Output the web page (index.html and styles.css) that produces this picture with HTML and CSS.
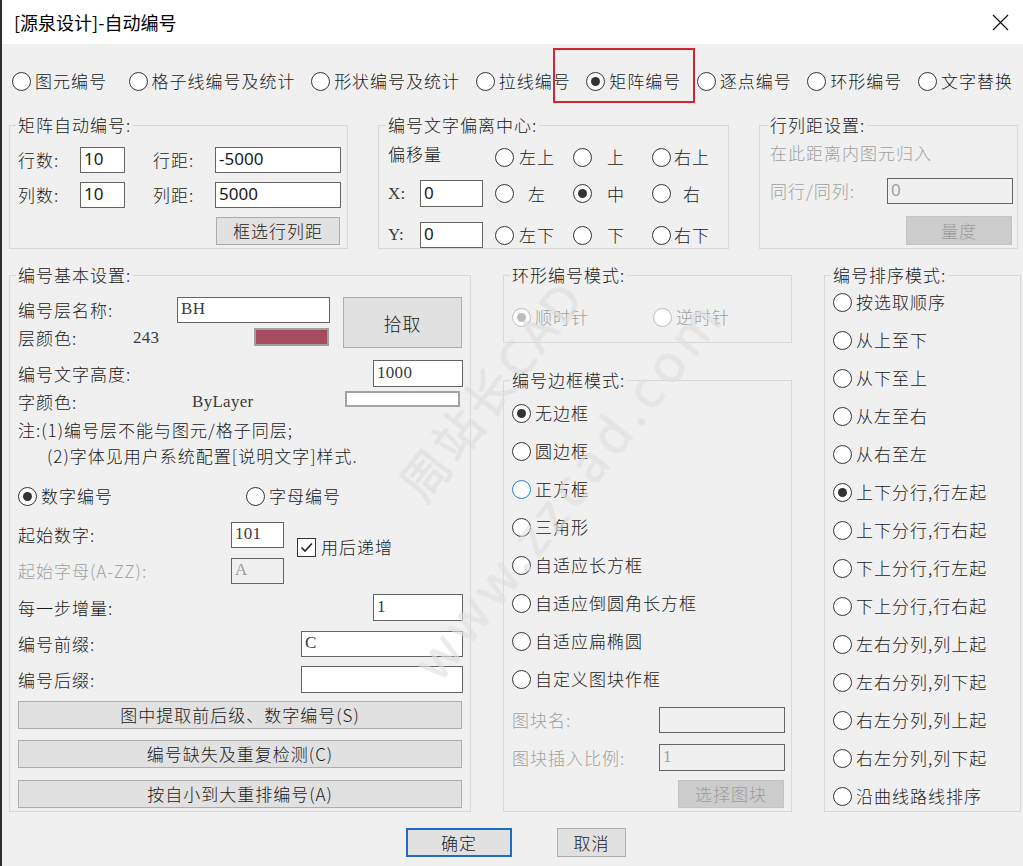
FILE: index.html
```html
<!DOCTYPE html>
<html lang="zh-CN">
<head>
<meta charset="utf-8">
<title>[源泉设计]-自动编号</title>
<link rel="stylesheet" href="styles.css">
</head>
<body>
<div class="win">
  <div class="titlebar">
    <span class="title">[源泉设计]-自动编号</span>
    <svg class="close" width="17" height="17" viewBox="0 0 17 17"><path d="M1 1L16 16M16 1L1 16" stroke="#111" stroke-width="1.2" fill="none"/></svg>
  </div>

  <div class="tabs">
    <span class="opt"><i class="rd"></i><span>图元编号</span></span>
    <span class="opt"><i class="rd"></i><span>格子线编号及统计</span></span>
    <span class="opt"><i class="rd"></i><span>形状编号及统计</span></span>
    <span class="opt"><i class="rd"></i><span>拉线编号</span></span>
    <span class="opt"><i class="rd on"></i><span>矩阵编号</span></span>
    <span class="opt"><i class="rd"></i><span>逐点编号</span></span>
    <span class="opt"><i class="rd"></i><span>环形编号</span></span>
    <span class="opt"><i class="rd"></i><span>文字替换</span></span>
    <div class="mark"></div>
  </div>

  <div class="toprow">
    <fieldset class="grp g1">
      <legend>矩阵自动编号:</legend>
      <div class="g1grid">
        <span>行数:</span><div class="tb sans">10</div><span></span>
        <span>行距:</span><div class="tb sans">-5000</div>
        <span>列数:</span><div class="tb sans">10</div><span></span>
        <span>列距:</span><div class="tb sans">5000</div>
        <div class="btn g1btn">框选行列距</div>
      </div>
    </fieldset>

    <fieldset class="grp g2">
      <legend>编号文字偏离中心:</legend>
      <div class="r2 r2a">
        <span class="offl">偏移量</span>
        <span class="cell c1"><i class="rd"></i><span class="cl w46">左上</span></span>
        <span class="cell c2"><i class="rd"></i><span class="cl w48">上</span></span>
        <span class="cell c3"><i class="rd"></i><span class="cl w42">右上</span></span>
      </div>
      <div class="r2 r2b">
        <span class="xl m">X:</span><div class="tb sans xin">0</div>
        <span class="cell c1"><i class="rd"></i><span class="cl w46">左</span></span>
        <span class="cell c2"><i class="rd on"></i><span class="cl w48">中</span></span>
        <span class="cell c3"><i class="rd"></i><span class="cl w42">右</span></span>
      </div>
      <div class="r2 r2c">
        <span class="xl m">Y:</span><div class="tb sans xin">0</div>
        <span class="cell c1"><i class="rd"></i><span class="cl w46">左下</span></span>
        <span class="cell c2"><i class="rd"></i><span class="cl w48">下</span></span>
        <span class="cell c3"><i class="rd"></i><span class="cl w42">右下</span></span>
      </div>
    </fieldset>

    <fieldset class="grp g3">
      <legend>行列距设置:</legend>
      <div class="dis line20">在此距离内图元归入</div>
      <div class="g3row">
        <span class="dis g3lab">同行/同列:</span><div class="tb tbdis sans g3in">0</div>
      </div>
      <div class="btn btndis g3btn">量度</div>
    </fieldset>
  </div>

  <div class="mainrow">
    <fieldset class="grp g4">
      <legend>编号基本设置:</legend>
      <div class="blk1">
        <span class="b1lab">编号层名称:</span>
        <div class="tb m bh">BH</div>
        <div class="btn pick">拾取</div>
        <span class="b1lab2">层颜色:</span>
        <span class="m num243">243</span>
        <div class="swatch"></div>
      </div>
      <div class="row rowc">
        <span>编号文字高度:</span><div class="tb m w90">1000</div>
      </div>
      <div class="row rowd">
        <span class="w174">字颜色:</span><span class="m">ByLayer</span><div class="wswatch"></div>
      </div>
      <div class="note">注:(1)编号层不能与图元/格子同层;</div>
      <div class="note note2">(2)字体见用户系统配置[说明文字]样式.</div>
      <div class="row rowg">
        <span class="opt w228"><i class="rd on"></i><span>数字编号</span></span>
        <span class="opt"><i class="rd"></i><span>字母编号</span></span>
      </div>
      <div class="blk2">
        <span>起始数字:</span><div class="tb m">101</div>
        <div class="chk">
          <span class="cb"><svg width="17" height="17" viewBox="0 0 17 17"><path d="M3.5 8.5L7 12L14 4.5" stroke="#222" stroke-width="1.6" fill="none"/></svg></span>
          <span>用后递增</span>
        </div>
        <span class="dis">起始字母(A-ZZ):</span><div class="tb tbdis m">A</div>
      </div>
      <div class="row rowj">
        <span>每一步增量:</span><div class="tb m w90">1</div>
      </div>
      <div class="row rowk">
        <span>编号前缀:</span><div class="tb m w162">C</div>
      </div>
      <div class="row rowl">
        <span>编号后缀:</span><div class="tb m w162"></div>
      </div>
      <div class="btn wide b1">图中提取前后级、数字编号(S)</div>
      <div class="btn wide b2">编号缺失及重复检测(C)</div>
      <div class="btn wide b3">按自小到大重排编号(A)</div>
    </fieldset>

    <div class="col2">
      <fieldset class="grp g5">
        <legend>环形编号模式:</legend>
        <div class="row">
          <span class="opt w142 dis"><i class="rd on rddis"></i><span>顺时针</span></span>
          <span class="opt dis"><i class="rd rddis"></i><span>逆时针</span></span>
        </div>
      </fieldset>
      <fieldset class="grp g6">
        <legend>编号边框模式:</legend>
        <div class="list">
          <span class="opt"><i class="rd on"></i><span>无边框</span></span>
          <span class="opt"><i class="rd"></i><span>圆边框</span></span>
          <span class="opt"><i class="rd hov"></i><span>正方框</span></span>
          <span class="opt"><i class="rd"></i><span>三角形</span></span>
          <span class="opt"><i class="rd"></i><span>自适应长方框</span></span>
          <span class="opt"><i class="rd"></i><span>自适应倒圆角长方框</span></span>
          <span class="opt"><i class="rd"></i><span>自适应扁椭圆</span></span>
          <span class="opt"><i class="rd"></i><span>自定义图块作框</span></span>
        </div>
        <div class="row rowbn">
          <span class="dis">图块名:</span><div class="tb tbdis w126"></div>
        </div>
        <div class="row rowbs">
          <span class="dis">图块插入比例:</span><div class="tb tbdis m w126">1</div>
        </div>
        <div class="btn btndis selblk">选择图块</div>
      </fieldset>
    </div>

    <fieldset class="grp g7">
      <legend>编号排序模式:</legend>
      <div class="list">
        <span class="opt"><i class="rd"></i><span>按选取顺序</span></span>
        <span class="opt"><i class="rd"></i><span>从上至下</span></span>
        <span class="opt"><i class="rd"></i><span>从下至上</span></span>
        <span class="opt"><i class="rd"></i><span>从左至右</span></span>
        <span class="opt"><i class="rd"></i><span>从右至左</span></span>
        <span class="opt"><i class="rd on"></i><span>上下分行,行左起</span></span>
        <span class="opt"><i class="rd"></i><span>上下分行,行右起</span></span>
        <span class="opt"><i class="rd"></i><span>下上分行,行左起</span></span>
        <span class="opt"><i class="rd"></i><span>下上分行,行右起</span></span>
        <span class="opt"><i class="rd"></i><span>左右分列,列上起</span></span>
        <span class="opt"><i class="rd"></i><span>左右分列,列下起</span></span>
        <span class="opt"><i class="rd"></i><span>右左分列,列上起</span></span>
        <span class="opt"><i class="rd"></i><span>右左分列,列下起</span></span>
        <span class="opt"><i class="rd"></i><span>沿曲线路线排序</span></span>
      </div>
    </fieldset>
  </div>

  <div class="footer">
    <div class="btn ok">确定</div>
    <div class="btn cancel">取消</div>
  </div>

  <div class="wm wm1">周站长CAD</div>
  <div class="wm wm2">www.zzcad.com</div>
</div>
</body>
</html>
```

FILE: styles.css
```css
* { box-sizing: border-box; }
html, body { margin: 0; padding: 0; background: #2b2b2b; }

.win {
  position: relative;
  width: 1023px;
  height: 866px;
  overflow: hidden;
  border-left: 2px solid #2d2d2d;
  background: #f0f0f0;
  font-family: "Noto Sans CJK SC", "Noto Sans", sans-serif;
  font-size: 17px;
  font-weight: 300;
  line-height: 20px;
  letter-spacing: 1px;
  color: #1a1a1a;
}

.m { font-family: "Liberation Serif", "Noto Sans CJK SC", serif; font-size: 17px; font-weight: 400; letter-spacing: 0.3px; color: #3a3a3a; }
.sans { font-family: "Noto Sans", "Noto Sans CJK SC", sans-serif; font-size: 17px; font-weight: 400; letter-spacing: 0; }
.dis { color: #a0a0a0; }

/* title bar */
.titlebar {
  height: 44px;
  background: #fff;
  display: flex;
  align-items: center;
  justify-content: space-between;
  padding: 0 14px 0 12px;
}
.title { font-size: 18px; font-weight: 400; letter-spacing: 0; color: #000; }

/* tabs */
.tabs {
  position: relative;
  height: 71px;
  display: flex;
  justify-content: space-between;
  align-items: flex-start;
  padding: 27px 10px 0 10px;
}
.tabs > .opt:first-child { margin-right: 6px; }
.mark {
  position: absolute;
  left: 551px;
  top: 4px;
  width: 142px;
  height: 55px;
  border: 2px solid #d5262f;
}

/* radio */
.opt { display: flex; align-items: center; gap: 4px; height: 20px; white-space: nowrap; }
.rd {
  position: relative;
  flex: none;
  display: block;
  width: 19px;
  height: 19px;
  border: 1px solid #333;
  border-radius: 50%;
  background: #fff;
}
.rd.on::after {
  content: "";
  position: absolute;
  left: 4px;
  top: 4px;
  width: 9px;
  height: 9px;
  border-radius: 50%;
  background: #333;
}
.rd.rddis { border-color: #bcbcbc; }
.rd.rddis.on::after { background: #bcbcbc; }
.rd.hov { border-color: #2a7bd0; }

/* group boxes */
.grp {
  margin: 0;
  min-width: 0;
  border: 1px solid #d9d9d9;
}
.grp legend { padding: 0 2px; margin-left: -2px; line-height: 20px; }

.toprow { display: flex; gap: 30px; padding-left: 7px; }

/* input box */
.tb {
  display: flex;
  align-items: center;
  background: #fff;
  border: 1px solid #646464;
  padding: 0 3px 2px 3px;
  height: 100%;
  white-space: nowrap;
}
.tbdis { background: #f0f0f0; color: #a0a0a0; }

/* buttons */
.btn {
  display: flex;
  align-items: center;
  justify-content: center;
  background: #e1e1e1;
  border: 1px solid #adadad;
  white-space: nowrap;
}
.btndis { background: #cccccc; border-color: #c4c4c4; color: #9c9c9c; }

/* group 1 */
.g1 { width: 339px; height: 134px; padding: 12px 6px 0 8px; }
.g1grid {
  display: grid;
  grid-template-columns: 62px 45px 28px 62px 126px;
  grid-template-rows: 26px 26px 28px;
  row-gap: 9px;
  align-items: center;
}
.g1grid .tb { height: 26px; }
.g1btn { grid-column: 4 / 6; justify-self: end; width: 124px; height: 28px; margin-right: 1px; }

/* group 2 */
.g2 { width: 351px; height: 134px; padding: 9px 0 0 9px; }
.r2 { display: flex; align-items: center; }
.r2a { height: 26px; }
.r2b { height: 27px; margin-top: 10px; }
.r2c { height: 26px; margin-top: 15px; }
.offl { width: 107px; align-self: flex-start; }
.xl { width: 32px; }
.xin { width: 63px; margin-right: 12px; }
.cell { display: flex; align-items: center; }
.c1 { width: 78px; }
.c2 { width: 79px; }
.cl { text-align: center; }
.w46 { width: 46px; }
.w48 { width: 48px; }
.w42 { width: 42px; }

/* group 3 */
.g3 { width: 259px; height: 134px; padding: 8px 0 0 10px; }
.line20 { height: 20px; }
.g3row { display: flex; align-items: center; height: 26px; margin-top: 15px; }
.g3lab { width: 117px; }
.g3in { width: 126px; }
.g3btn { width: 106px; height: 29px; margin-top: 12px; margin-left: 136px; }

/* main area */
.mainrow { display: flex; align-items: flex-start; gap: 32px; padding-left: 7px; margin-top: 16px; }

.g4 { width: 462px; height: 547px; padding: 12px 7px 0 8px; }
.blk1 {
  display: grid;
  grid-template-columns: 115px 44px 77px 76px 13px 119px;
  grid-template-rows: 26px 20px;
  row-gap: 5px;
  align-items: center;
}
.b1lab { grid-column: 1 / 3; grid-row: 1; }
.bh { grid-column: 3 / 5; grid-row: 1; }
.pick { grid-column: 6; grid-row: 1 / 3; align-self: stretch; font-size: 18px; }
.b1lab2 { grid-column: 1; grid-row: 2; }
.num243 { grid-column: 2 / 4; grid-row: 2; }
.swatch {
  grid-column: 4; grid-row: 2;
  align-self: start;
  width: 75px; height: 18px;
  background: #a64a5f;
  border: 2px solid #9f9f9f;
}

.row { display: flex; align-items: center; justify-content: space-between; }
.rowc { margin-top: 12px; height: 27px; }
.w90 { width: 90px; }
.w162 { width: 162px; }
.w126 { width: 126px; }
.rowd { margin-top: 3px; height: 24px; justify-content: flex-start; }
.w174 { width: 174px; }
.wswatch {
  margin-left: auto;
  margin-right: 3px;
  align-self: flex-start;
  margin-top: 1px;
  width: 115px;
  height: 16px;
  background: #fff;
  border: 2px solid #a3a3a3;
}
.note { height: 26px; margin-top: 3px; display: flex; align-items: center; white-space: nowrap; }
.note2 { margin-top: 0; padding-left: 29px; }
.rowg { margin-top: 17px; height: 20px; justify-content: flex-start; }
.w228 { width: 228px; }
.w142 { width: 141px; }

.blk2 {
  display: grid;
  grid-template-columns: 213px 53px 13px auto;
  grid-template-rows: 26px 26px;
  row-gap: 10px;
  align-items: center;
  margin-top: 16px;
}
.blk2 > span:nth-child(1) { grid-column: 1; grid-row: 1; }
.blk2 > .tb:nth-child(2) { grid-column: 2; grid-row: 1; }
.chk {
  grid-column: 4; grid-row: 1 / 3;
  align-self: start;
  margin-top: 15px;
  display: flex; align-items: center; gap: 5px;
}
.cb {
  display: flex; align-items: center; justify-content: center;
  width: 19px; height: 19px;
  border: 1px solid #333;
  background: #fff;
}
.blk2 > span.dis { grid-column: 1; grid-row: 2; }
.blk2 > .tbdis { grid-column: 2; grid-row: 2; }

.rowj { margin-top: 10px; height: 27px; }
.rowk { margin-top: 10px; height: 26px; }
.rowl { margin-top: 9px; height: 27px; }
.wide { width: 444px; height: 28px; }
.b1 { margin-top: 8px; }
.b2 { margin-top: 11px; }
.b3 { margin-top: 12px; }

.col2 { width: 289px; display: flex; flex-direction: column; gap: 27px; }
.g5 { height: 78px; padding: 22px 6px 0 8px; }
.g5 .row { justify-content: flex-start; height: 20px; }
.g6 { height: 442px; padding: 13px 6px 0 8px; display: flex; flex-direction: column; }
.list { display: flex; flex-direction: column; gap: 18px; }
.rowbn { margin-top: 18px; height: 26px; }
.rowbs { margin-top: 11px; height: 27px; }
.selblk { align-self: flex-end; width: 106px; height: 28px; margin-top: 9px; margin-right: 1px; }

.g7 { width: 197px; height: 547px; padding: 7px 0 0 8px; }

/* footer */
.footer { display: flex; gap: 45px; padding-left: 404px; margin-top: 16px; }
.ok { width: 106px; height: 29px; border: 2px solid #1f6cc4; }
.cancel { width: 69px; height: 29px; }

/* watermark */
.wm {
  position: absolute;
  font-family: "Noto Sans", "Noto Sans CJK SC", sans-serif;
  font-size: 48px;
  font-weight: 400;
  line-height: 56px;
  letter-spacing: 4px;
  color: rgba(255, 255, 255, 0.55);
  text-shadow: 0 0 1px rgba(0, 0, 0, 0.18);
  white-space: nowrap;
  pointer-events: none;
  transform: translate(-50%, -50%) rotate(-52deg);
}
.wm1 { left: 490px; top: 390px; }
.wm2 { left: 566px; top: 488px; font-size: 52px; letter-spacing: 6px; }
```
